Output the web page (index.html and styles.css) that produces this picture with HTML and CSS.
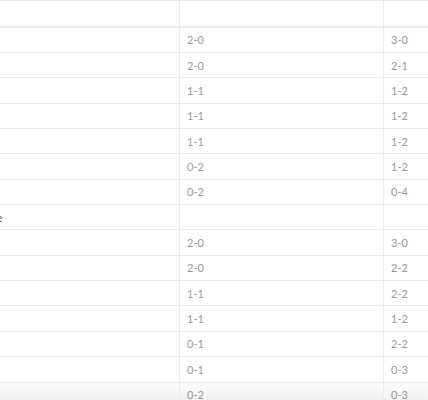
FILE: index.html
```html
<!DOCTYPE html>
<html>
<head>
<meta charset="utf-8">
<link rel="stylesheet" href="styles.css">
</head>
<body>
<div class="table">
  <div class="row"><div class="cell label"></div><div class="cell"></div><div class="cell"></div></div>
  <div class="row head"><div class="cell label"></div><div class="cell"></div><div class="cell"></div></div>
  <div class="row"><div class="cell label"></div><div class="cell">2-0</div><div class="cell">3-0</div></div>
  <div class="row"><div class="cell label"></div><div class="cell">2-0</div><div class="cell">2-1</div></div>
  <div class="row"><div class="cell label"></div><div class="cell">1-1</div><div class="cell">1-2</div></div>
  <div class="row"><div class="cell label"></div><div class="cell">1-1</div><div class="cell">1-2</div></div>
  <div class="row"><div class="cell label"></div><div class="cell">1-1</div><div class="cell">1-2</div></div>
  <div class="row"><div class="cell label"></div><div class="cell">0-2</div><div class="cell">1-2</div></div>
  <div class="row"><div class="cell label"></div><div class="cell">0-2</div><div class="cell">0-4</div></div>
  <div class="row sub"><div class="cell label">Home</div><div class="cell"></div><div class="cell"></div></div>
  <div class="row"><div class="cell label"></div><div class="cell">2-0</div><div class="cell">3-0</div></div>
  <div class="row"><div class="cell label"></div><div class="cell">2-0</div><div class="cell">2-2</div></div>
  <div class="row"><div class="cell label"></div><div class="cell">1-1</div><div class="cell">2-2</div></div>
  <div class="row"><div class="cell label"></div><div class="cell">1-1</div><div class="cell">1-2</div></div>
  <div class="row"><div class="cell label"></div><div class="cell">0-1</div><div class="cell">2-2</div></div>
  <div class="row"><div class="cell label"></div><div class="cell">0-1</div><div class="cell">0-3</div></div>
  <div class="row last"><div class="cell label"></div><div class="cell">0-2</div><div class="cell">0-3</div></div>
</div>
</body>
</html>
```

FILE: styles.css
```css
html, body {
  margin: 0;
  padding: 0;
  background: #fff;
  overflow: hidden;
}
body {
  font-family: Lato, "Liberation Sans", sans-serif;
  font-size: 11px;
  color: #999;
}
.table {
  margin-top: -24px;
  margin-left: -200px;
  width: 790px;
}
.row {
  display: grid;
  grid-template-columns: 380px 204px 206px;
  height: 25.35px;
  box-sizing: border-box;
  border-bottom: 1px solid #ececec;
}
.row.head {
  border-bottom: 2px solid #ececec;
  height: 26.35px;
}
.cell {
  display: flex;
  align-items: center;
  padding: 0 7px;
  border-right: 1px solid #ececec;
  white-space: nowrap;
}
.cell.label {
  padding-left: 173px;
  color: #555;
}
.row.last {
  background: linear-gradient(#fbfbfb, #ececec);
}
```
